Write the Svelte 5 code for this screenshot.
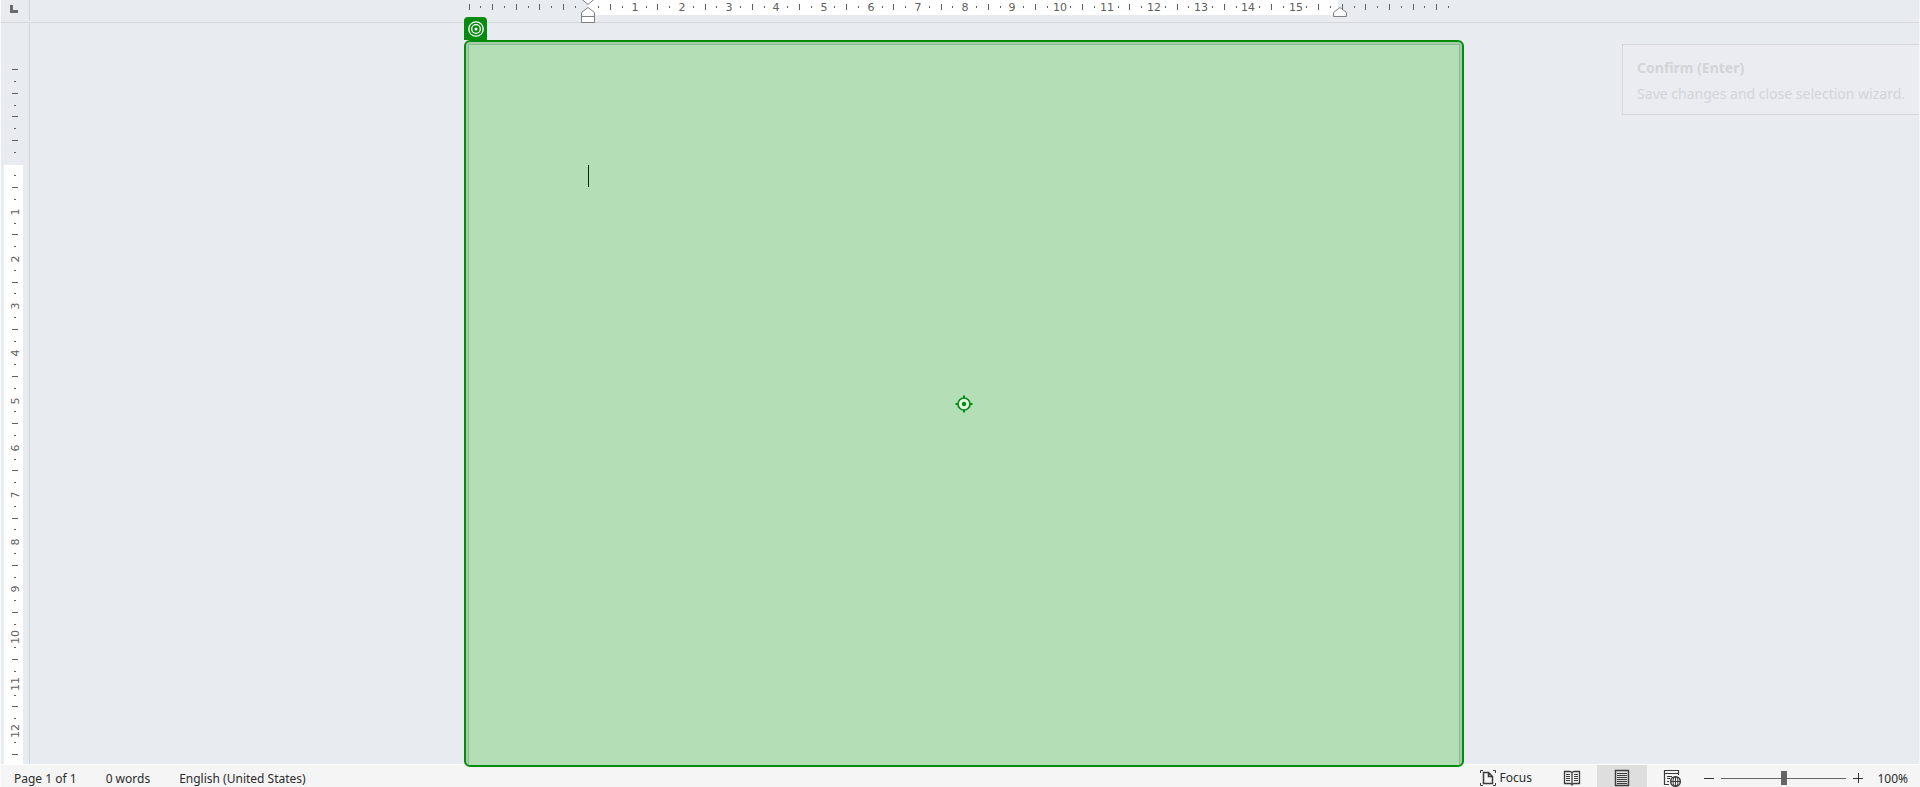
<script>
  const unit = 47.2;
  const step = unit / 4;

  function marks(first, last, start, end) {
    const out = [];
    for (let k = first; k <= last; k++) {
      const inside = k >= start && k < end;
      const pos = Math.floor(k * step);
      if (k % 2 !== 0) out.push({ kind: 'dot', pos });
      else if (inside && k % 4 === 0) {
        if (k !== 0) out.push({ kind: 'label', pos, text: k / 4 });
      } else if (k !== 0) out.push({ kind: 'tick', pos });
    }
    return out;
  }

  const across = marks(-10, 73, 0, 64);
  const down = marks(-8, 50, 0, 200);
  let zoom = $state(50);
</script>

<div class="window">
  <header class="top">
    <button class="tab-stop" aria-label="Left tab">
      <svg width="8" height="8" viewBox="0 0 8 8"><path d="M0 0h3v5h5v3H0z" fill="#6a6a6a" /></svg>
    </button>
    <div class="ruler-area">
      <svg class="ruler" width="1000" height="23" viewBox="0 0 1000 23">
        <rect x="124" y="0" width="750" height="15" fill="#fff" />
        {#each across as m}
          {#if m.kind === 'label'}
            <text x={m.pos + 124} y="11" text-anchor="middle">{m.text}</text>
          {:else if m.kind === 'tick'}
            <rect x={m.pos + 123} y="4" width="1" height="6" />
          {:else}
            <rect x={m.pos + 123} y="6" width="1" height="2" />
          {/if}
        {/each}
        <g class="marker">
          <path d="M117.500 -2.500V-1L124 4.500L130.500 -1V-2.500z" />
          <path d="M117.500 22.500V12.500L124 7.500L130.500 12.500V22.500zM117.500 16.500H130.500" />
          <path d="M869.500 16.500V12.500L876 7.500L882.500 12.500V16.500z" />
        </g>
      </svg>
    </div>
  </header>

  <main>
    <aside>
      <svg class="ruler" width="29" height="741" viewBox="0 23 29 741">
        <rect x="4" y="165" width="19" height="599" fill="#fff" />
        {#each down as m}
          {#if m.kind === 'label'}
            <text transform="translate(19 {m.pos + 165}) rotate(-90)" text-anchor="middle">{m.text}</text>
          {:else if m.kind === 'tick'}
            <rect x="12" y={m.pos + 164} width="6" height="1" />
          {:else}
            <rect x="14" y={m.pos + 164} width="2" height="1" />
          {/if}
        {/each}
      </svg>
    </aside>
    <section class="canvas">
      <div class="page">
        <div class="sheet"></div>
        <span class="badge">
          <svg width="16" height="16" viewBox="0 0 16 16" fill="none" stroke="#fff" stroke-width="1.300">
            <circle cx="8" cy="8" r="7.200" /><circle cx="8" cy="8" r="4.300" /><circle cx="8" cy="8" r="1.500" fill="#fff" stroke="none" />
          </svg>
        </span>
        <span class="caret"></span>
        <svg class="target" width="18" height="18" viewBox="0 0 18 18">
          <path d="M9 0.500v17M0.500 9h17" stroke="#058c0e" stroke-width="2" />
          <circle cx="9" cy="9" r="6" fill="#e4f4e4" stroke="#058c0e" stroke-width="1.700" />
          <circle cx="9" cy="9" r="2.200" fill="#058c0e" />
        </svg>
      </div>
      <div class="tip" role="tooltip">
        <strong>Confirm (Enter)</strong>
        <span>Save changes and close selection wizard.</span>
      </div>
    </section>
  </main>

  <footer>
    <div class="info">
      <button>Page 1 of 1</button>
      <button>0 words</button>
      <button>English (United States)</button>
    </div>
    <div class="views">
      <button class="focus">
        <svg width="18" height="18" viewBox="0 0 18 18" fill="none" stroke="#3c3c3c">
          <path d="M4 1.500H1.500V4M14 1.500h2.500V4M1.500 14v2.500H4M16.500 14v2.500H14" />
          <path d="M4.500 3.500h5l4 4v7h-9zM9.500 3.500v4h4" stroke-width="1.500" />
        </svg>
        Focus
      </button>
      <button class="view" aria-label="Read mode">
        <svg width="18" height="18" viewBox="0 0 18 18" fill="none" stroke="#3c3c3c">
          <path d="M1.500 2.500h5.500l2 1 2-1h5.500v12H11l-2 1-2-1H1.500zM9 3.500v13" stroke-width="1.300" />
          <path d="M3 5.500h4M3 7.500h4M3 9.500h4M3 11.500h4M11 5.500h4M11 7.500h4M11 9.500h4M11 11.500h4" />
        </svg>
      </button>
      <button class="view on" aria-label="Print layout">
        <svg width="18" height="18" viewBox="0 0 18 18" fill="none" stroke="#3c3c3c">
          <path d="M2.500 1.500h13v15h-13z" stroke-width="1.400" />
          <path d="M4 4.500h10M4 6.500h10M4 8.500h10M4 10.500h10M4 12.500h10M4 14.500h10" />
        </svg>
      </button>
      <button class="view" aria-label="Web layout">
        <svg width="18" height="18" viewBox="0 0 18 18" fill="none" stroke="#3c3c3c">
          <path d="M6 15.500H1.500v-14h14V6M1.500 4.500h14M4 7.500h5M4 9.500h3M4 12.500h2" stroke-width="1.200" />
          <circle cx="12.500" cy="12.500" r="4.800" stroke-width="1.500" />
          <path d="M7.500 12.500h10M12.500 7.500v10" />
          <ellipse cx="12.500" cy="12.500" rx="2.400" ry="4.800" />
        </svg>
      </button>
      <div class="zoom">
        <button aria-label="Zoom out"><svg width="10" height="10" viewBox="0 0 10 10"><path d="M0 5.500h10" stroke="#333" /></svg></button>
        <input type="range" min="0" max="100" bind:value={zoom} aria-label="Zoom" />
        <button aria-label="Zoom in"><svg width="10" height="10" viewBox="0 0 10 10"><path d="M0 5.500h10M5.500 0v10" stroke="#333" /></svg></button>
      </div>
      <button class="percent">100%</button>
    </div>
  </footer>
</div>

<style>
  :global(body) { margin: 0; background: #e8ebf0; }
  .window {
    display: flex;
    flex-direction: column;
    height: 100vh;
    box-sizing: border-box;
    overflow: hidden;
    border-left: 1px solid #fbfbfb;
    border-right: 1px solid #f4f5f8;
    background: #e8ebf0;
    color: #2b2b2b;
    font: 12px/20px "Noto Sans", sans-serif;
  }
  button {
    display: flex;
    align-items: center;
    padding: 0;
    border: 0;
    background: none;
    color: inherit;
    font: inherit;
    white-space: nowrap;
  }
  svg { display: block; flex: none; }
  .top { display: flex; flex: none; height: 22px; border-bottom: 1px solid #d4d6d8; }
  .tab-stop { width: 28px; height: 21px; padding: 0 0 3px 9px; box-sizing: border-box; }
  .ruler-area {
    display: flex;
    flex: 1;
    justify-content: center;
    height: 21px;
    padding-right: 21px;
    border-left: 1px solid #d4d6d8;
  }
  .ruler { fill: #606060; font: 11px "DejaVu Sans", sans-serif; position: relative; z-index: 2; }
  .marker { fill: #fff; stroke: #808080; }
  main { display: flex; flex: 1; min-height: 0; }
  aside { flex: none; width: 28px; overflow: hidden; border-right: 1px solid #d4d6d8; }
  aside .ruler { margin-left: -1px; }
  .canvas { position: relative; display: flex; flex: 1; justify-content: center; padding: 17px 21px 0 0; }
  .page {
    position: relative;
    z-index: 3;
    width: 1000px;
    box-sizing: border-box;
    margin-bottom: -3px;
    padding: 2px 2px 0;
    border: 2px solid #058c0e;
    border-radius: 6px;
    background: #a5cfa9;
  }
  .sheet { height: 100%; box-sizing: border-box; border: 1px solid #8bb890; border-bottom: 0; background: #b4deb6; }
  .badge {
    position: absolute;
    left: -2px;
    top: -25px;
    display: grid;
    place-items: center;
    width: 23px;
    height: 23px;
    border-radius: 4px 4px 0 0;
    background: #058c0e;
  }
  .caret { position: absolute; left: 122px; top: 123px; width: 1px; height: 22px; background: #022a04; }
  .target { position: absolute; left: 50%; top: 50%; transform: translate(-50%, -50%); }
  .tip {
    position: absolute;
    right: 0;
    top: 21px;
    display: flex;
    flex-direction: column;
    gap: 6px;
    padding: 13px 14px 10px;
    border: 1px solid #d5d7db;
    border-right: 0;
    background: #ebecf1;
    color: #d2d4d8;
    font: 14px/20px "Noto Sans", sans-serif;
  }
  footer {
    display: flex;
    flex: none;
    justify-content: space-between;
    height: 22px;
    border-top: 1px solid #fff;
    background: #f5f5f5;
  }
  .info { display: flex; gap: 29px; padding: 6px 0 0 13px; }
  .info button { height: 16px; }
  .views { display: flex; align-items: stretch; }
  .focus { gap: 3px; margin-right: 15px; padding-top: 4px; }
  .view { width: 50px; justify-content: center; padding-top: 3px; }
  .view.on { background: #dedede; }
  .zoom { display: flex; align-items: center; gap: 7px; padding: 4px 0 0 7px; }
  .zoom input { appearance: none; width: 125px; height: 14px; margin: 0; background: linear-gradient(#666, #666) center / 100% 1px no-repeat; }
  .zoom input::-webkit-slider-thumb { appearance: none; width: 6px; height: 14px; background: #666; }
  .percent { width: 56px; padding: 5px 11px 0 0; justify-content: flex-end; }
</style>
